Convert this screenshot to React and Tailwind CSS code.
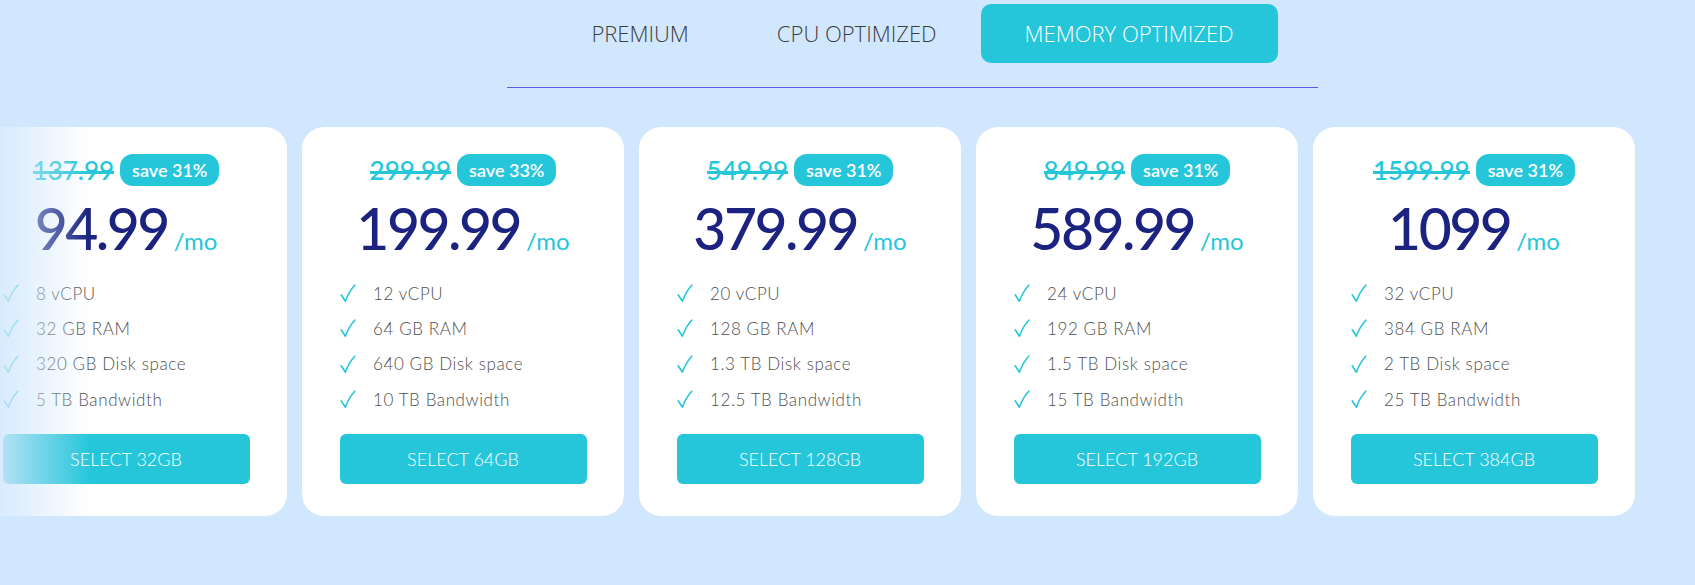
const tabs = ['PREMIUM', 'CPU OPTIMIZED', 'MEMORY OPTIMIZED'];

const plans = [
  { old: '137.99', save: 'save 31%', price: '94.99', cpu: '8 vCPU', ram: '32 GB RAM', disk: '320 GB Disk space', bw: '5 TB Bandwidth', cta: 'SELECT 32GB' },
  { old: '299.99', save: 'save 33%', price: '199.99', cpu: '12 vCPU', ram: '64 GB RAM', disk: '640 GB Disk space', bw: '10 TB Bandwidth', cta: 'SELECT 64GB' },
  { old: '549.99', save: 'save 31%', price: '379.99', cpu: '20 vCPU', ram: '128 GB RAM', disk: '1.3 TB Disk space', bw: '12.5 TB Bandwidth', cta: 'SELECT 128GB' },
  { old: '849.99', save: 'save 31%', price: '589.99', cpu: '24 vCPU', ram: '192 GB RAM', disk: '1.5 TB Disk space', bw: '15 TB Bandwidth', cta: 'SELECT 192GB' },
  { old: '1599.99', save: 'save 31%', price: '1099', cpu: '32 vCPU', ram: '384 GB RAM', disk: '2 TB Disk space', bw: '25 TB Bandwidth', cta: 'SELECT 384GB' }
];

function Check() {
  return (
    <svg width="16" height="19" viewBox="0 0 16 19" fill="none" className="shrink-0">
      <path d="M1.2 10.8 L5.4 17.2 C7.8 10.5 11 5.2 14.8 1.2" stroke="#26c6da" strokeWidth="1.6" strokeLinecap="round" strokeLinejoin="round" />
    </svg>
  );
}

function PlanCard({ plan }) {
  const features = [plan.cpu, plan.ram, plan.disk, plan.bw];
  return (
    <div className="flex w-[322px] shrink-0 flex-col rounded-[22px] bg-white pb-[32px] pt-[27px]">
      <div className="flex h-[32px] items-center justify-center gap-[6px]">
        <span className="relative text-[26px] font-medium leading-none text-[#26c6da]">
          {plan.old}
          <span className="absolute left-0 right-0 top-[52%] h-[3px] bg-[#26c6da]" />
        </span>
        <span className="flex h-[32px] items-center rounded-[13px] bg-[#26c6da] px-[12px] text-[18px] font-semibold text-white">
          {plan.save}
        </span>
      </div>
      <div className="mt-[14px] flex h-[56px] items-baseline justify-center gap-[6px] leading-none">
        <span className="text-[57px] font-medium tracking-[-2.5px] text-[#1b227f]">{plan.price}</span>
        <span className="text-[24px] text-[#26c6da]">/mo</span>
      </div>
      <ul className="mt-[20px] flex flex-col pl-[38px]">
        {features.map((f) => (
          <li key={f} className="flex h-[35.3px] items-center gap-[17px] text-[17px] font-light tracking-[0.6px] text-[#4f4f4f]">
            <Check />
            <span>{f}</span>
          </li>
        ))}
      </ul>
      <button className="mx-auto mt-[17px] flex h-[50px] w-[247px] items-center justify-center rounded-[6px] bg-[#26c6da] text-[18px] font-light text-white">
        {plan.cta}
      </button>
    </div>
  );
}

export default function App() {
  return (
    <div className="relative h-[585px] overflow-hidden bg-[#d1e7fd]" style={{ fontFamily: 'Lato, "Noto Sans", sans-serif' }}>
      <div className="ml-[507px] w-[811px] border-b border-[#5d5ce0] pb-[24px] pt-[4px]">
        <div className="flex justify-center" style={{ fontFamily: '"Open Sans", sans-serif' }}>
          {tabs.map((t, i) => (
            <button
              key={t}
              className={
                i === 2
                  ? 'h-[59px] rounded-[10px] bg-[#26c6da] px-[44px] text-[22px] font-light text-white'
                  : 'h-[59px] px-[44px] text-[22px] font-light text-[#3d3d3d]'
              }
            >
              {t}
            </button>
          ))}
        </div>
      </div>

      <div className="mt-[39px] ml-[-35px] flex gap-[15px]">
        {plans.map((p) => (
          <PlanCard key={p.price} plan={p} />
        ))}
      </div>

      <div className="pointer-events-none absolute bottom-0 left-0 top-[120px] w-[90px] bg-gradient-to-r from-[#d1e7fd]/85 to-transparent" />
    </div>
  );
}
